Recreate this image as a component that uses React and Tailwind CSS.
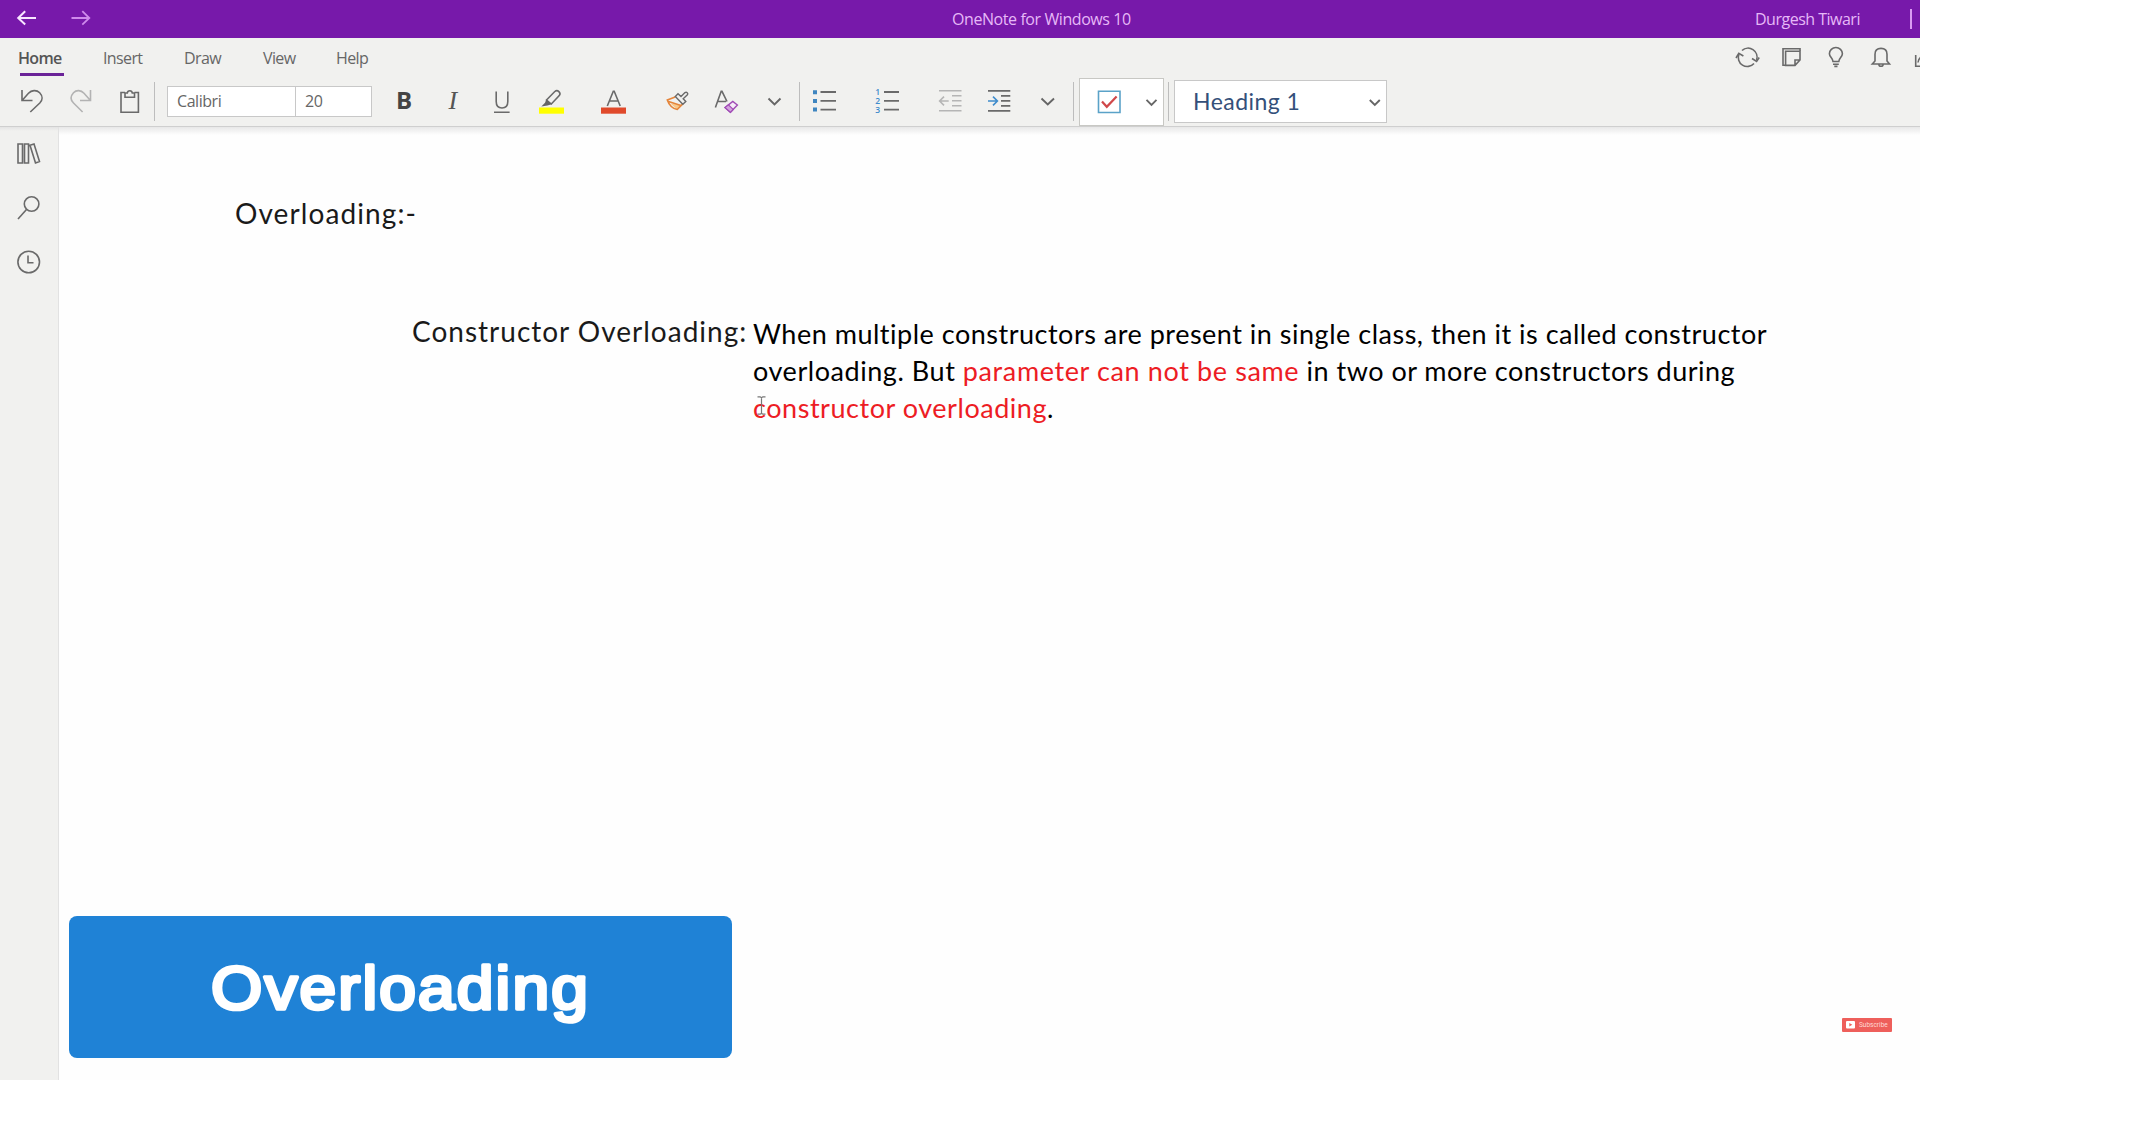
const UI = "font-['Open_Sans',sans-serif]";
const NOTE = "font-['Lato',sans-serif] [font-variant-ligatures:none]";

/* A slice of the toolbar: the view box spans x..x+w in window coordinates. */
function Tool({ x, w, y = 78, h = 47, children, label }) {
  return (
    <svg
      width={w}
      height={h}
      viewBox={`${x} ${y} ${w} ${h}`}
      className="shrink-0"
      fill="none"
      stroke="#6a6a6a"
      strokeWidth="1.6"
      role="img"
      aria-label={label}
    >
      {children}
    </svg>
  );
}

function Chevron({ x, y, w, h }) {
  return <path d={`M${x} ${y}l${w / 2} ${h}l${w / 2} -${h}`} strokeWidth="1.9" stroke="#666" />;
}

function TitleBar() {
  return (
    <header className={`flex h-[38px] shrink-0 items-center bg-[#7719aa] text-base leading-none text-[#e6b8f7] ${UI}`}>
      <Tool x={0} w={110} y={0} h={38} label="Navigation">
        <path d="M36 18H18M25.2 11.2L18.2 18L25.2 24.6" stroke="#f8e6ff" strokeWidth="2" />
        <path d="M71.5 18H89.5M82.3 11.2L89.3 18L82.3 24.6" stroke="#cf8aec" strokeWidth="1.8" />
      </Tool>
      <h1 className="ml-[842px] w-[803px] whitespace-nowrap tracking-[-0.42px]">OneNote for Windows 10</h1>
      <span className="w-[155px] whitespace-nowrap tracking-[-0.5px]">Durgesh Tiwari</span>
      <span className="h-5 w-0.5 bg-[#d99cf2]" />
    </header>
  );
}

function Tabs() {
  return (
    <div className={`flex h-10 items-start pl-[18px] text-base leading-10 text-[#666] ${UI}`}>
      <nav className="flex w-[1702px] tracking-[-0.62px]">
        <div className="w-[85px] font-semibold tracking-[-0.7px] text-[#555]">
          <div className="h-[35px]">Home</div>
          <div className="ml-0.5 h-[3px] w-11 bg-[#6b2398]" />
        </div>
        <span className="w-[81px]">Insert</span>
        <span className="w-[79px]">Draw</span>
        <span className="w-[73px]">View</span>
        <span>Help</span>
      </nav>
      <Tool x={1720} w={50} y={38} h={40} label="Sync">
        <path d="M1742 50.5A9 9 0 0 1 1756.6 60M1754 63.5A9 9 0 0 1 1739 54" />
        <path d="M1752 58.5L1756.6 61.5L1759.2 57.5M1736 58L1738.8 53.4L1743.4 56" />
      </Tool>
      <Tool x={1770} w={46} y={38} h={40} label="Feed">
        <path d="M1785.5 65.2H1783V48.8H1800V51" />
        <path d="M1785.6 51.3H1800V60L1795 65.4H1785.6ZM1800 60H1795V65.4" />
      </Tool>
      <Tool x={1816} w={42} y={38} h={40} label="Tips">
        <path d="M1833 61.5C1833 58 1829.4 57 1829.4 53.7A6.5 6.2 0 0 1 1842.4 53.7C1842.4 57 1838.8 58 1838.8 61.5ZM1833 64.2H1838.8M1834.3 66.4H1837.5" />
      </Tool>
      <Tool x={1858} w={42} y={38} h={40} label="Notifications">
        <path d="M1872.3 64H1889.5L1887 61V54.2C1887 50.4 1884.4 48.4 1881 48.4S1875 50.4 1875 54.2V61ZM1878.8 64.2C1879 67 1883 67 1883.2 64.2" />
      </Tool>
      <Tool x={1900} w={20} y={38} h={40} label="Share">
        <path d="M1915.7 55V66.2H1922M1918 62.5C1918.2 60 1919 58.5 1921 57" />
      </Tool>
    </div>
  );
}

function Divider({ className }) {
  return <span className={`mt-1 h-[39px] w-px shrink-0 bg-[#bdbdbd] ${className}`} />;
}

function Toolbar() {
  return (
    <div className="flex h-[49px] items-start border-b border-[#cfcfcf]">
      <Tool x={0} w={55} label="Undo">
        <path d="M22 90V100.5H32.5M22.5 100L28.5 93.3C31.5 90 36.5 89.6 39.7 92.7C42.8 96 42.8 100 39.8 103L30.3 112" />
      </Tool>
      <Tool x={55} w={50} label="Redo">
        <path d="M90.5 90V100.5H80M90 100L84 93.3C81 90 76.5 89.6 73.5 92.7C70.5 96 70.5 100 73.5 103L82.6 112" stroke="#b3b3b3" />
      </Tool>
      <Tool x={105} w={49} label="Paste">
        <path d="M125 92.5H121V112.3H138.4V92.5H134.5M125 97.2V93H127.3C127.6 90 132 90 132.3 93H134.5V97.2Z" />
      </Tool>
      <Divider />
      <div className={`ml-3 mt-2 flex h-[31px] w-[205px] border border-[#c8c8c8] bg-white text-base leading-[29px] tracking-[-0.45px] text-[#666] ${UI}`}>
        <span className="w-[128px] border-r border-[#c8c8c8] pl-[9px]">Calibri</span>
        <span className="pl-[9px]">20</span>
      </div>
      <Tool x={372} w={56} label="Bold">
        <text x="396" y="109" fontSize="24" fontWeight="700" fill="#444" stroke="none" className={UI}>B</text>
      </Tool>
      <Tool x={428} w={50} label="Italic">
        <text x="448.5" y="109" fontSize="26" fontStyle="italic" fill="#555" stroke="none" className="font-['Liberation_Serif',serif]">I</text>
      </Tool>
      <Tool x={478} w={46} label="Underline">
        <path d="M496.2 91.5V101.5C496.2 105.5 498.4 108 502 108S507.8 105.5 507.8 101.5V91.5M494 112.2H509.6" />
      </Tool>
      <Tool x={524} w={64} label="Highlight">
        <path d="M539 107.5H564V113.7H539Z" fill="#ff0" stroke="none" />
        <path d="M546.5 100L554.8 91.5C557.5 89.3 561.5 92.5 559.3 95.6L551.3 104Z" />
        <path d="M546.3 99.6L551.6 104.2L547.5 105.4L541.3 106.5L545 102.8Z" fill="#666" stroke="none" />
      </Tool>
      <Tool x={588} w={60} label="Font color">
        <path d="M601 107.5H626V113.7H601Z" fill="#e04a2b" stroke="none" />
        <path d="M607.3 106L613.3 91.3H614.2L620.2 106M609.5 101H618" />
      </Tool>
      <Tool x={648} w={52} label="Format painter">
        <path d="M670.5 103.5L681.5 105L677 109.3Z" fill="#f8c98b" stroke="none" />
        <path d="M675.2 97L667.3 100C669 105 672.5 108.5 677.3 109.5L683.2 103.4M668.5 101.5L681 105.4" stroke="#e5853a" />
        <path d="M675.3 96.5L678 93.8L681 96.6L685 92.6C686.5 91.4 688.6 93.2 687.4 94.8L683.2 98.8L685.8 101.4L682.8 104.2Z" fill="#f1f1ef" strokeWidth="1.4" />
      </Tool>
      <Tool x={700} w={56} label="Clear formatting">
        <path d="M715.4 107.5L721.2 91.3H722L727 101.5M718 101.5H726" />
        <path d="M725 107.6L732.8 101.4L737.4 105L730.4 112.3Z" stroke="#a04bb5" fill="#f6ebf8" strokeWidth="1.4" />
        <path d="M725 107.6L728.4 104.9L733.2 109.4L730.4 112.3Z" stroke="#a04bb5" fill="#d3a2de" strokeWidth="1.2" />
      </Tool>
      <Tool x={756} w={43} label="More fonts">
        <Chevron x={768.5} y={98.5} w={12} h={6} />
      </Tool>
      <Divider />
      <Tool x={800} w={62} label="Bullets">
        <path d="M820.5 92H836M820.5 100.8H836M820.5 109.6H836" strokeWidth="1.8" />
        <path d="M813 90.2h4v4h-4zM813 99h4v4h-4zM813 107.6h4v4h-4z" fill="#3f86c0" stroke="none" />
      </Tool>
      <Tool x={862} w={62} label="Numbering">
        <path d="M884 92H899M884 100.8H899M884 109.6H899" strokeWidth="1.8" />
        <g fill="#3f8ccc" stroke="none" fontSize="8.5" fontWeight="600" className={UI}>
          <text x="875.3" y="95">1</text>
          <text x="875.3" y="104">2</text>
          <text x="875.3" y="112.6">3</text>
        </g>
      </Tool>
      <Tool x={924} w={52} label="Decrease indent">
        <path d="M939 90.8H961.5M952 95.8H961.5M952 100.8H961.5M952 105.8H961.5M939 110.8H961.5M948.7 101H940M944 96.6L939.6 101L944 105.4" stroke="#b5b5b5" />
      </Tool>
      <Tool x={976} w={48} label="Increase indent">
        <path d="M988 90.8H1010.3M1001 95.8H1010.3M1001 100.8H1010.3M1001 105.8H1010.3M988 110.8H1010.3" strokeWidth="1.8" />
        <path d="M988 101H997M993 96.6L997.4 101L993 105.4" stroke="#3f8ccc" />
      </Tool>
      <Tool x={1024} w={49} label="More paragraph">
        <Chevron x={1041.5} y={98.5} w={12.5} h={6} />
      </Tool>
      <Divider />
      <div className="ml-[5px] flex h-[48px] w-[85px] border border-[#c8c8c4] bg-white">
        <Tool x={1080} w={83} y={79} h={46} label="To do tag">
          <path d="M1098.5 91.2H1120V112.5H1098.5Z" stroke="#5aa2c8" />
          <path d="M1102 101.5L1106.8 106.8L1116.6 96.5" stroke="#d0484a" strokeWidth="2.2" />
          <Chevron x={1146.5} y={99.8} w={10} h={5} />
        </Tool>
      </div>
      <Divider className="ml-1" />
      <div className="ml-[5px] mt-[2px] flex h-[43px] w-[213px] items-center border border-[#c8c8c8] bg-white">
        <span className={`mb-px w-[193px] pl-[18px] text-[23px] leading-none tracking-[0.45px] text-[#34507a] ${NOTE}`}>Heading 1</span>
        <Tool x={1368} w={18} y={94} h={16} label="Open styles">
          <Chevron x={1369.8} y={100} w={10} h={5} />
        </Tool>
      </div>
    </div>
  );
}

function Sidebar() {
  return (
    <aside className="flex w-[59px] shrink-0 flex-col border-r border-[#e2e2e2] bg-[#f1f1ef]">
      <div className="h-1 shrink-0 bg-linear-to-b from-[#e4e4e4] to-[#f1f1ef]" />
      <Tool x={0} w={58} y={131} h={49} label="Notebooks">
        <path d="M18 144H22.5V163H18ZM24.5 144H28.5V163H24.5ZM30 145.2L34 144L39.5 161.5L35.5 163Z" />
      </Tool>
      <Tool x={0} w={58} y={180} h={54} label="Search">
        <circle cx="31.6" cy="204" r="7.3" />
        <path d="M26.5 209.5L18 219" />
      </Tool>
      <Tool x={0} w={58} y={234} h={54} label="Recent">
        <circle cx="28.7" cy="262" r="10.8" />
        <path d="M28 255.5V262.7H33.5" />
      </Tool>
    </aside>
  );
}

/* Rounded lettering: a stroke with round joins softens the glyph corners. */
function BannerText() {
  return (
    <svg width="400" height="80" viewBox="0 0 400 80" className="ml-[132px]">
      <text
        x="10"
        y="62"
        fontSize="61"
        textLength="379"
        lengthAdjust="spacingAndGlyphs"
        letterSpacing="2"
        fill="#fff"
        stroke="#fff"
        strokeWidth="3.6"
        strokeLinejoin="round"
        className="font-['Liberation_Sans',sans-serif]"
      >
        Overloading
      </text>
    </svg>
  );
}

function Page() {
  return (
    <main className="flex flex-1 flex-col bg-[#fefefe]">
      <div className="h-2 bg-linear-to-b from-[#e8e8e8] to-[#fefefe]" />
      <h2 className={`ml-[176px] mt-[61px] text-[28px] leading-[34px] tracking-[1.1px] text-[#1a1a1a] ${NOTE}`}>
        Overloading:-
      </h2>
      <div className="ml-[353px] mt-[84px] flex items-start">
        <h3 className={`w-[341px] shrink-0 whitespace-nowrap text-[28px] leading-[34px] tracking-[1px] text-[#1a1a1a] ${NOTE}`}>
          Constructor Overloading:
        </h3>
        <p className={`relative mt-px whitespace-nowrap text-[27px] leading-[37px] tracking-[0.51px] text-black ${NOTE}`}>
          When multiple constructors are present in single class, then it is called constructor
          <br />
          <span className="tracking-[0.55px]">overloading. But </span>
          <span className="tracking-[0.62px] text-[#ed1c24]">parameter can not be same</span>
          <span className="tracking-[0.49px]"> in two or more constructors during</span>
          <br />
          <span className="tracking-[0.54px] text-[#ed1c24]">constructor overloading</span>.
          <svg className="absolute left-1 top-[81px]" width="9" height="19" viewBox="0 0 9 19" fill="none" stroke="#777" strokeWidth="1.2">
            <path d="M0.5 0.8H3.2L4.5 1.8L5.8 0.8H8.5M4.5 1.5V17.5M0.5 18.2H3.2L4.5 17.2L5.8 18.2H8.5" />
          </svg>
        </p>
      </div>
      <div className="mb-[22px] ml-2.5 mt-auto flex items-end">
        <div className="flex h-[142px] w-[663px] items-center rounded-lg bg-[#1f82d6]">
          <BannerText />
        </div>
        <div className="mb-[26px] ml-[1110px] flex h-3.5 w-[50px] items-center rounded-[1px] bg-[#ee5f5b]">
          <svg className="ml-1" width="9" height="8" viewBox="0 0 9 8">
            <rect width="9" height="7.5" rx="1" fill="#fff" />
            <path d="M3.3 2L6.3 3.8L3.3 5.6Z" fill="#ee5f5b" />
          </svg>
          <span className="ml-1 text-[6.5px] leading-none text-[#ffd9d6] font-['Roboto',sans-serif]">Subscribe</span>
        </div>
      </div>
    </main>
  );
}

export default function App() {
  return (
    <div className="h-[1134px] w-full overflow-hidden bg-white">
      <div className="flex h-[1080px] w-[1920px] flex-col overflow-hidden">
        <TitleBar />
        <div className="h-[89px] shrink-0 bg-[#f1f1ef]">
          <Tabs />
          <Toolbar />
        </div>
        <div className="flex flex-1">
          <Sidebar />
          <Page />
        </div>
      </div>
    </div>
  );
}
